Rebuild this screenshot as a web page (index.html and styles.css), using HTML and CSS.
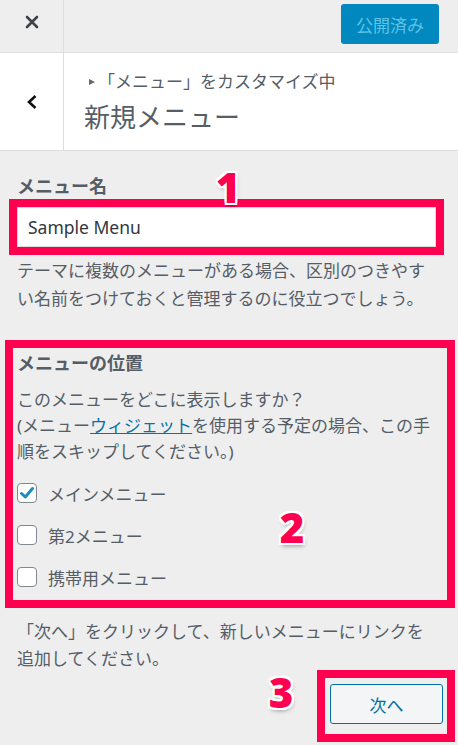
FILE: index.html
```html
<!doctype html>
<html lang="ja">
  <head>
    <meta charset="utf-8" />
    <title>新規メニュー</title>
    <link rel="stylesheet" href="styles.css">
  </head>
  <body>
    <div id="panel">

      <div class="topbar">
        <div class="close-btn">
          <svg width="14" height="14" viewBox="0 0 14 14"><path d="M2 2 L12 12 M12 2 L2 12" stroke="#3c434a" stroke-width="2.6" stroke-linecap="round"/></svg>
        </div>
        <button class="publish-btn" disabled>公開済み</button>
      </div>

      <div class="header">
        <div class="back-btn">
          <svg width="12" height="16" viewBox="0 0 12 16"><path d="M9.5 2 L3 8 L9.5 14" fill="none" stroke="#111" stroke-width="2.6" stroke-linejoin="miter"/></svg>
        </div>
        <div class="header-title">
          <span class="crumb"><svg width="8" height="8" viewBox="0 0 8 8"><path d="M1 1 L7 4 L1 7 Z" fill="#666"/></svg>「メニュー」をカスタマイズ中</span>
          <h2>新規メニュー</h2>
        </div>
      </div>

      <div class="content">
        <h3 class="field-title">メニュー名</h3>
        <input type="text" class="menu-name" value="Sample Menu">
        <p class="desc">テーマに複数のメニューがある場合、区別のつきやすい名前をつけておくと管理するのに役立つでしょう。</p>

        <div class="locations">
          <h3 class="field-title">メニューの位置</h3>
          <p class="loc-desc">このメニューをどこに表示しますか？<br>(メニュー<a href="#">ウィジェット</a>を使用する予定の場合、この手順をスキップしてください。)</p>
          <ul class="loc-list">
            <li><span class="check on"><svg width="16" height="16" viewBox="0 0 16 16"><path d="M2.5 8.5 L6.3 12 L13.5 3.5" fill="none" stroke="#1e8cbe" stroke-width="3" stroke-linejoin="round" stroke-linecap="round"/></svg></span>メインメニュー</li>
            <li><span class="check"></span>第2メニュー</li>
            <li><span class="check"></span>携帯用メニュー</li>
          </ul>
        </div>

        <p class="next-desc">「次へ」をクリックして、新しいメニューにリンクを追加してください。</p>

        <div class="next-wrap">
          <button class="next-btn">次へ</button>
        </div>
      </div>

      <span class="num num-1">1</span>
      <span class="num num-2">2</span>
      <span class="num num-3">3</span>
    </div>
  </body>
</html>
```

FILE: styles.css
```css
*{
  margin: 0;
  padding: 0;
  box-sizing: border-box;
}

body{
  background-color: #eeeeee;
  font-family: "Noto Sans", "Noto Sans CJK JP", sans-serif;
  font-size: 17px;
  color: #555d66;
}

#panel{
  position: relative;
  width: 458px;
  height: 745px;
  overflow: hidden;
}

/* top bar */
.topbar{
  display: flex;
  justify-content: space-between;
  align-items: flex-start;
  height: 53px;
  border-bottom: 1px solid #dddddd;
}

.close-btn{
  width: 64px;
  height: 52px;
  border-right: 1px solid #dddddd;
  display: flex;
  align-items: center;
  justify-content: center;
  padding-bottom: 8px;
}

.publish-btn{
  margin-top: 4px;
  margin-right: 19px;
  width: 98px;
  height: 40px;
  border: none;
  border-radius: 3px;
  background-color: #0088bf;
  color: #5fc1e6;
  font-family: inherit;
  font-size: 17px;
}

/* header */
.header{
  display: flex;
  height: 98px;
  background-color: white;
  border-bottom: 1px solid #dddddd;
}

.back-btn{
  width: 64px;
  border-right: 1px solid #dddddd;
  display: flex;
  align-items: center;
  justify-content: center;
}

.header-title{
  padding-left: 20px;
  padding-top: 17px;
}

.crumb{
  display: flex;
  align-items: center;
  font-size: 17px;
  line-height: 24px;
  color: #555d66;
}

.crumb svg{
  margin-left: 4px;
  margin-right: 2px;
}

.header-title h2{
  font-size: 26px;
  font-weight: 400;
  line-height: 36px;
  margin-top: 5px;
  color: #555d66;
}

/* content */
.content{
  padding: 22px 17px 0;
}

.field-title{
  font-size: 18px;
  font-weight: 700;
  line-height: 26px;
  color: #555d66;
}

.menu-name{
  display: block;
  margin-top: 8px;
  width: 419px;
  height: 40px;
  padding-left: 10px;
  border: 1px solid #dddddd;
  background-color: white;
  font-family: inherit;
  font-size: 17.5px;
  color: #32373c;
  outline: 8px solid #ff0050;
}

.desc{
  margin-top: 10px;
  line-height: 28px;
}

.locations{
  margin: 27px -14px 0 -12px;
  border: 8px solid #ff0050;
  padding: 2px 6px 2px 4px;
}

.loc-desc{
  margin-top: 11px;
  line-height: 26px;
}

.loc-desc a{
  color: #0073aa;
}

.loc-list{
  list-style: none;
  margin-top: 7px;
}

.loc-list li{
  display: flex;
  align-items: center;
  height: 42px;
}

.check{
  width: 20px;
  height: 20px;
  margin-right: 11px;
  border: 1px solid #7e8993;
  border-radius: 4px;
  background-color: white;
  display: flex;
  align-items: center;
  justify-content: center;
}

.next-desc{
  margin-top: 10px;
  padding-right: 8px;
  line-height: 27px;
}

.next-wrap{
  width: 138px;
  margin: -2px -14px 0 auto;
  border: 8px solid #ff0050;
  padding: 6px 4px 10px 5px;
}

.next-btn{
  display: block;
  width: 113px;
  height: 40px;
  border: 1px solid #0071a1;
  border-radius: 3px;
  background-color: #f3f5f6;
  color: #0071a1;
  font-family: inherit;
  font-size: 17px;
}

/* annotation numbers */
.num{
  position: absolute;
  width: 30px;
  text-align: center;
  font-family: "Noto Sans", sans-serif;
  font-weight: 900;
  font-size: 42px;
  line-height: 1;
  color: #ff0050;
  text-shadow: 2px 0 0 #fff, -2px 0 0 #fff, 0 2px 0 #fff, 0 -2px 0 #fff,
    2px 2px 0 #fff, -2px 2px 0 #fff, 2px -2px 0 #fff, -2px -2px 0 #fff,
    1px 3px 4px rgba(0,0,0,0.35);
}

.num-1{ left: 213px; top: 166px; }
.num-2{ left: 277px; top: 506px; }
.num-3{ left: 266px; top: 671px; }
```
